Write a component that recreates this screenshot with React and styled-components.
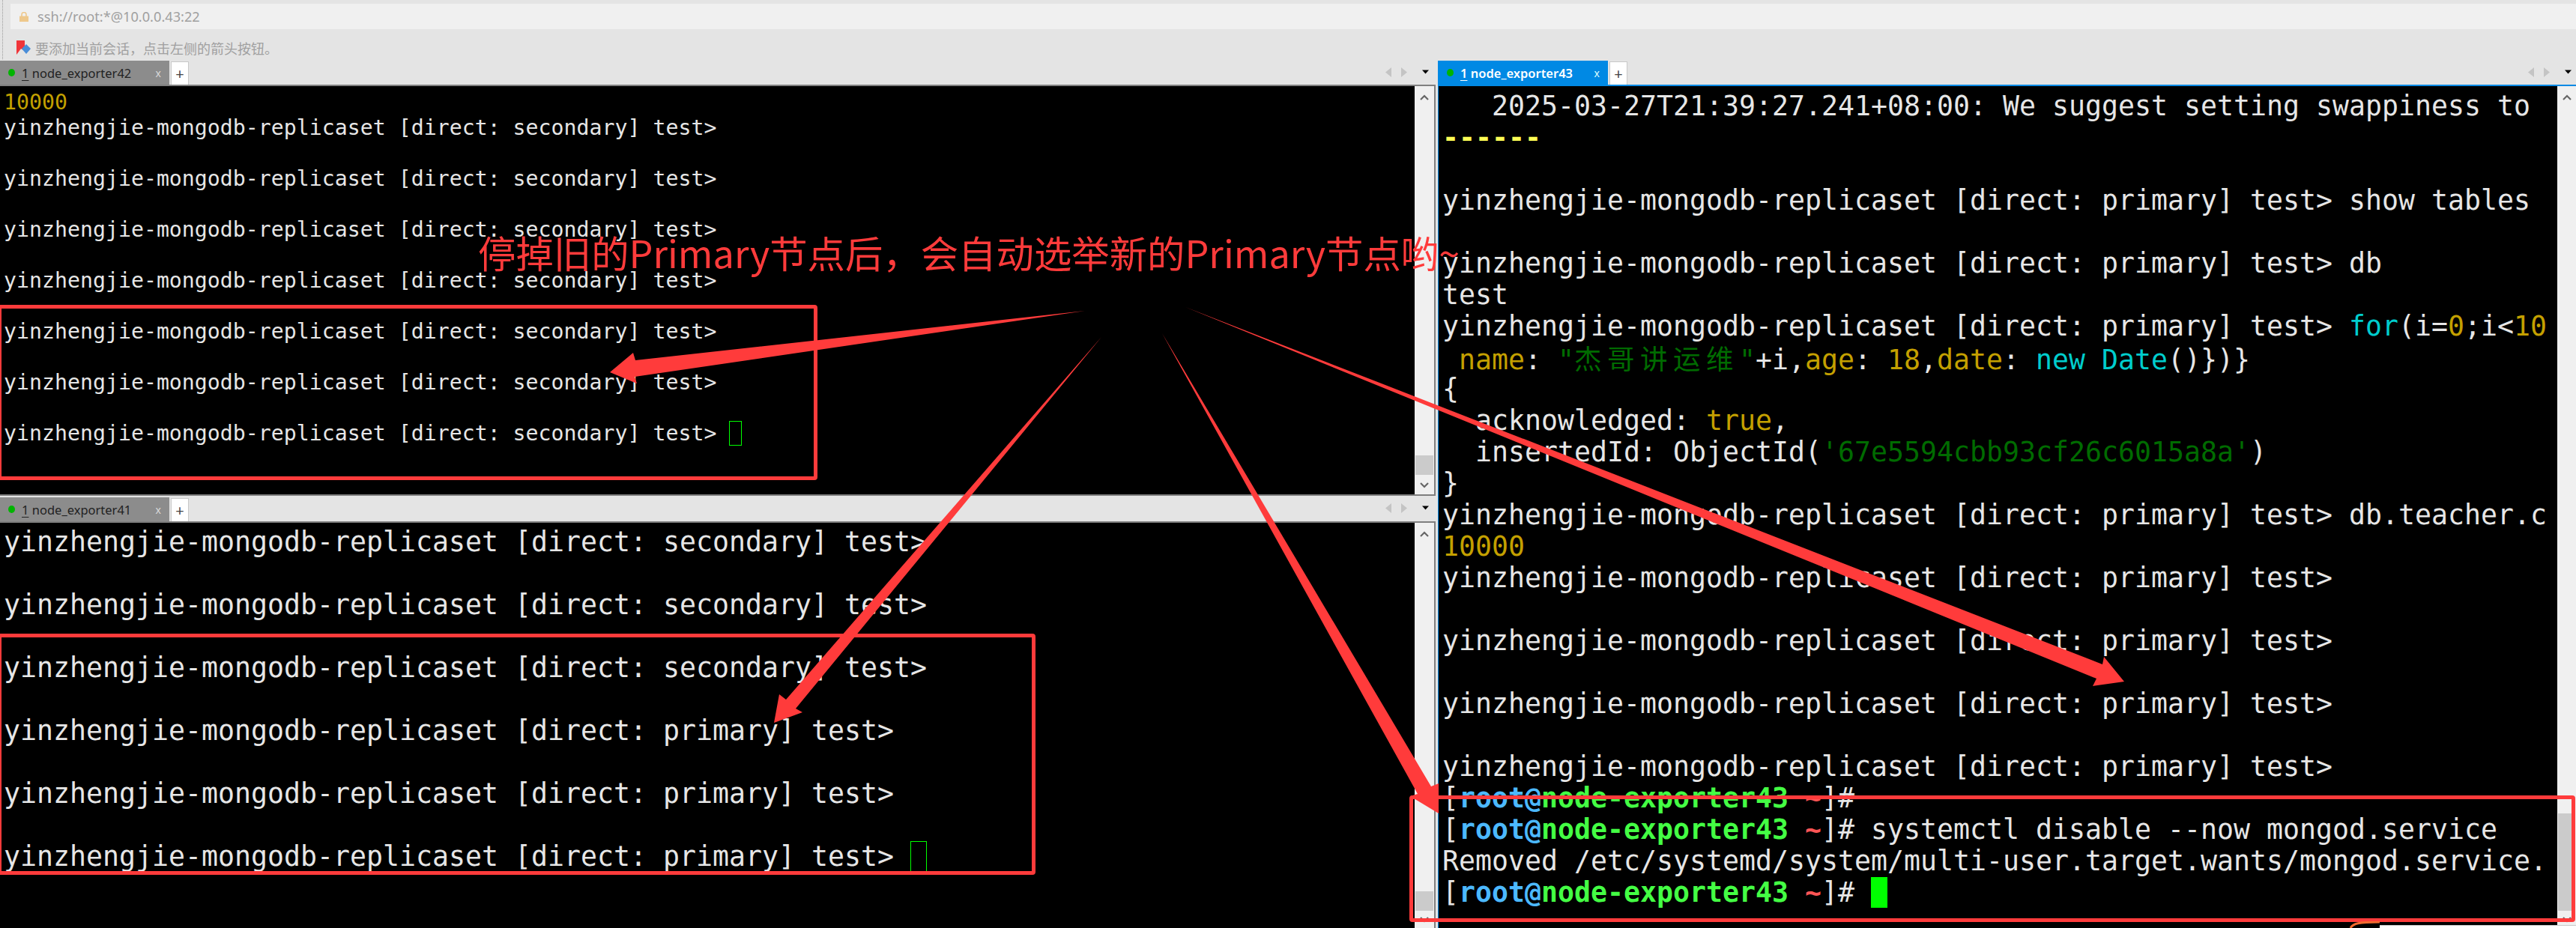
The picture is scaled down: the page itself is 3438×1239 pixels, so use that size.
import styled, { createGlobalStyle } from "styled-components";

const GlobalStyle = createGlobalStyle`
  html, body {
    margin: 0;
    padding: 0;
    background: #000;
  }
`;

const Page = styled.div`
  position: relative;
  width: 3438px;
  height: 1239px;
  overflow: hidden;
  display: flex;
  flex-direction: column;
  background: #e4e4e4;
  font-family: "Noto Sans", "Noto Sans CJK SC", sans-serif;
`;

const Toolbar = styled.div`
  height: 81px;
  flex: none;
  box-sizing: border-box;
  padding: 5px 0 0 14px;
  position: relative;
  background: #e4e4e4;

  &::before {
    content: "";
    position: absolute;
    left: 3px;
    top: 0;
    bottom: 2px;
    border-left: 1px dotted #9a9a9a;
  }
`;

const AddressBar = styled.div`
  height: 34px;
  display: flex;
  align-items: center;
  gap: 12px;
  padding-left: 12px;
  background: #f0f0f0;
  color: #a0a0a0;
  font-size: 18.2px;
`;

const HintRow = styled.div`
  height: 34px;
  margin-top: 8px;
  display: flex;
  align-items: center;
  gap: 5px;
  padding-left: 8px;
  color: #a0a0a0;
  font-size: 18px;
`;

const Workspace = styled.div`
  flex: 1;
  display: flex;
  min-height: 0;
`;

const LeftColumn = styled.div`
  width: 1916px;
  flex: none;
  display: flex;
  flex-direction: column;
`;

const Pane = styled.div`
  display: flex;
  flex-direction: column;
  height: ${(p) => p.$height}px;
  flex: ${(p) => (p.$height ? "none" : 1)};
  min-width: 0;
`;

const RightColumn = styled(Pane)`
  margin-left: 3px;
  border-left: 1px solid #0089e4;
`;

const TabBar = styled.div`
  box-sizing: border-box;
  height: ${(p) => (p.$lower ? 38 : 34)}px;
  flex: none;
  display: flex;
  align-items: flex-end;
  gap: 2px;
  padding-bottom: 2px;
  background: #e4e4e4;
  border-top: ${(p) => (p.$lower ? "2px solid #7f7f7f" : "0")};
  position: relative;

  &::after {
    content: "";
    position: absolute;
    left: 0;
    right: 0;
    bottom: 0;
    height: 2px;
    background: ${(p) => (p.$active ? "#0089e4" : "#7f7f7f")};
  }
`;

const Tab = styled.div`
  box-sizing: border-box;
  width: 226px;
  height: 32px;
  display: flex;
  align-items: center;
  padding-left: 11px;
  background: ${(p) => (p.$active ? "#0089e4" : "#8c8c8c")};
  color: ${(p) => (p.$active ? "#fff" : "#222")};
  font-size: 16.5px;
  font-weight: ${(p) => (p.$active ? 600 : 400)};
`;

const TabLabel = styled.span`
  white-space: pre;

  u {
    text-underline-offset: 3px;
  }
`;

const Dot = styled.span`
  width: 9px;
  height: 10px;
  border-radius: 50%;
  background: #00b400;
  margin-right: 9px;
  flex: none;
`;

const TabClose = styled.span`
  margin-left: auto;
  margin-right: 11px;
  color: ${(p) => (p.$active ? "#dff" : "#d8d8d8")};
  font-size: 14px;
  font-weight: 400;
`;

const PlusButton = styled.div`
  width: 24px;
  height: 31px;
  display: flex;
  align-items: center;
  justify-content: center;
  background: #fff;
  border: 1px solid #c8c8c8;
  border-bottom: 0;
  box-sizing: border-box;
  color: #444;
  font-size: 20px;
`;

const TabNav = styled.div`
  margin-left: auto;
  align-self: center;
  display: flex;
  align-items: center;
  margin-right: ${(p) => p.$right}px;
`;

const Body = styled.div`
  flex: 1;
  display: flex;
  min-height: 0;
`;

const Terminal = styled.div`
  flex: 1;
  min-width: 0;
  overflow: hidden;
  box-sizing: border-box;
  padding: ${(p) => p.$top}px 0 0 5px;
  background: #000;
  color: #e6e6e6;
  font-family: "DejaVu Sans Mono", "Noto Sans CJK SC", monospace;
  font-size: ${(p) => (p.$small ? "28.2px" : "36.5px")};
  letter-spacing: ${(p) => (p.$small ? "0.02px" : "0.025px")};
  line-height: ${(p) => (p.$small ? 34 : 42)}px;
`;

const Row = styled.div`
  height: ${(p) => (p.$small ? 34 : 42)}px;
  white-space: pre;
`;

const Yellow = styled.span`
  color: #c4a000;
`;

const BrightYellow = styled.span`
  color: #ffff55;
  font-weight: 700;
`;

const Cyan = styled.span`
  color: #00cdcd;
`;

const DarkGreen = styled.span`
  color: #006b00;
`;

const Wide = styled(DarkGreen)`
  font-family: "Noto Sans CJK SC", sans-serif;
  letter-spacing: 7.5px;
`;

const PromptUser = styled.span`
  color: #4cb9ff;
  font-weight: 700;
`;

const PromptHost = styled.span`
  color: #44ff44;
  font-weight: 700;
`;

const PromptTilde = styled.span`
  color: #ff5555;
  font-weight: 700;
`;

const Cursor = styled.span`
  display: inline-block;
  box-sizing: border-box;
  vertical-align: middle;
  width: ${(p) => p.$width}px;
  height: ${(p) => p.$size}px;
  margin-top: -4px;
  border: 1px solid #00ff00;
  background: ${(p) => (p.$solid ? "#00ff00" : "transparent")};
`;

const Scrollbar = styled.div`
  width: ${(p) => p.$width}px;
  flex: none;
  box-sizing: border-box;
  display: flex;
  flex-direction: column;
  align-items: center;
  background: #f0f0f0;
  border-right: ${(p) => (p.$edge ? "2px solid #7f7f7f" : "0")};
`;

const ScrollCap = styled.div`
  height: ${(p) => p.$height}px;
  flex: none;
  display: flex;
  align-items: center;
  justify-content: center;
`;

const ScrollGap = styled.div`
  flex: 1;
`;

const Thumb = styled.div`
  width: calc(100% - 2px);
  height: ${(p) => p.$height}px;
  flex: none;
  background: #cbcbcb;
`;

const Mark = styled.div`
  position: absolute;
  box-sizing: border-box;
  left: ${(p) => p.$x}px;
  top: ${(p) => p.$y}px;
  width: ${(p) => p.$w}px;
  height: ${(p) => p.$h}px;
  border: 5.5px solid #ff3b3b;
  border-radius: 4px;
`;

const Caption = styled.div`
  position: absolute;
  left: 638px;
  top: 301px;
  color: #ff3b3b;
  font-family: "Noto Sans CJK SC", sans-serif;
  font-weight: 400;
  font-size: 50.4px;
  line-height: 72px;
  white-space: pre;
`;

const ArrowLayer = styled.svg`
  position: absolute;
  left: 0;
  top: 0;
`;

const BottomStrip = styled.div`
  position: absolute;
  left: 3176px;
  right: 0;
  top: 1235px;
  height: 4px;
  background: #fff;
  border-top: 1px solid #c8c8c8;
`;

const OrangeArc = styled.svg`
  position: absolute;
  left: 3136px;
  top: 1230px;
`;

const LockIcon = () => (
  <svg width="12" height="13" viewBox="0 0 12 13">
    <path d="M3 6V3.5a3 3 0 0 1 6 0V6" fill="none" stroke="#eec88c" strokeWidth="1.6" />
    <rect x="0" y="5.5" width="12" height="7.5" fill="#eec88c" />
  </svg>
);

const BookmarkIcon = () => (
  <svg width="20" height="20" viewBox="0 0 20 20">
    <path d="M0 0h11v14l-5 -3l-6 8z" fill="#f0353a" />
    <path d="M13 5l6 6l-6 7l-6 -7z" fill="#4a8ed8" />
  </svg>
);

const Chevron = ({ down }) => (
  <svg width="12" height="9" viewBox="0 0 12 9">
    <path
      d={down ? "M1 2l5 5l5 -5" : "M1 7l5 -5l5 5"}
      fill="none"
      stroke="#666"
      strokeWidth="2.2"
    />
  </svg>
);

const NavArrows = () => (
  <svg width="58" height="14" viewBox="0 0 58 14">
    <path d="M8 0v13L0 6.5z" fill="#c4c4c4" />
    <path d="M21 0v13l8 -6.5z" fill="#c4c4c4" />
    <path d="M49 3.5h9l-4.5 5z" fill="#000" />
  </svg>
);

const Prompt = ({ mongo, role = "primary", children }) =>
  mongo ? (
    <>
      {`yinzhengjie-mongodb-replicaset [direct: ${role}] test>`}
      {children}
    </>
  ) : (
    <>
      [<PromptUser>root@</PromptUser>
      <PromptHost>node-exporter43</PromptHost> <PromptTilde>~</PromptTilde>]#
      {children}
    </>
  );

const PaneScroll = ({ thumb, tail, width = 28, edge }) => (
  <Scrollbar $width={width} $edge={edge}>
    <ScrollCap $height={30}>
      <Chevron />
    </ScrollCap>
    <ScrollGap />
    <Thumb $height={thumb} />
    <ScrollCap $height={tail}>
      <Chevron down />
    </ScrollCap>
  </Scrollbar>
);

const TabStrip = ({ name, active, lower, navRight }) => (
  <TabBar $active={active} $lower={lower}>
    <Tab $active={active}>
      <Dot />
      <TabLabel>
        <u>1</u> {name}
      </TabLabel>
      <TabClose $active={active}>x</TabClose>
    </Tab>
    <PlusButton>+</PlusButton>
    <TabNav $right={navRight}>
      <NavArrows />
    </TabNav>
  </TabBar>
);

const App = () => {
  return (
    <>
      <GlobalStyle />
      <Page>
        <Toolbar>
          <AddressBar>
            <LockIcon />
            ssh://root:*@10.0.0.43:22
          </AddressBar>
          <HintRow>
            <BookmarkIcon />
            要添加当前会话，点击左侧的箭头按钮。
          </HintRow>
        </Toolbar>
        <Workspace>
          <LeftColumn>
            <Pane $height={579}>
              <TabStrip name="node_exporter42" navRight={9} />
              <Body>
                <Terminal $small $top={5}>
                  <Row $small>
                    <Yellow>10000</Yellow>
                  </Row>
                  {[0, 1, 2, 3, 4, 5, 6].map((i) => (
                    <div key={i}>
                      <Row $small>
                        <Prompt mongo role="secondary">
                          {i === 6 && (
                            <>
                              {" "}
                              <Cursor $width={17} $size={33} />
                            </>
                          )}
                        </Prompt>
                      </Row>
                      <Row $small> </Row>
                    </div>
                  ))}
                </Terminal>
                <PaneScroll thumb={26} tail={26} edge />
              </Body>
            </Pane>
            <Pane>
              <TabStrip name="node_exporter41" lower navRight={9} />
              <Body>
                <Terminal $top={5}>
                  {["secondary", "secondary", "secondary", "primary", "primary", "primary"].map((role, i) => (
                    <div key={i}>
                      <Row>
                        <Prompt mongo role={role}>
                          {i === 5 && (
                            <>
                              {" "}
                              <Cursor $width={22} $size={42} />
                            </>
                          )}
                        </Prompt>
                      </Row>
                      <Row> </Row>
                    </div>
                  ))}
                </Terminal>
                <PaneScroll thumb={26} tail={23} edge />
              </Body>
            </Pane>
          </LeftColumn>
          <RightColumn>
            <TabStrip name="node_exporter43" active navRight={6} />
            <Body>
              <Terminal $top={6}>
                <Row>{"   2025-03-27T21:39:27.241+08:00: We suggest setting swappiness to"}</Row>
                <Row>
                  <BrightYellow>------</BrightYellow>
                </Row>
                <Row> </Row>
                <Row>
                  <Prompt mongo> show tables</Prompt>
                </Row>
                <Row> </Row>
                <Row>
                  <Prompt mongo> db</Prompt>
                </Row>
                <Row>test</Row>
                <Row>
                  <Prompt mongo>
                    {" "}
                    <Cyan>for</Cyan>(i=<Yellow>0</Yellow>;i&lt;<Yellow>10</Yellow>
                  </Prompt>
                </Row>
                <Row>
                  {" "}
                  <Yellow>name</Yellow>: <DarkGreen>"</DarkGreen>
                  <Wide>杰哥讲运维</Wide>
                  <DarkGreen>"</DarkGreen>+i,<Yellow>age</Yellow>: <Yellow>18</Yellow>,<Yellow>date</Yellow>:{" "}
                  <Cyan>new</Cyan> <Cyan>Date</Cyan>()&#125;)&#125;
                </Row>
                <Row>&#123;</Row>
                <Row>
                  {"  acknowledged: "}
                  <Yellow>true</Yellow>,
                </Row>
                <Row>
                  {"  insertedId: ObjectId("}
                  <DarkGreen>'67e5594cbb93cf26c6015a8a'</DarkGreen>)
                </Row>
                <Row>&#125;</Row>
                <Row>
                  <Prompt mongo> db.teacher.c</Prompt>
                </Row>
                <Row>
                  <Yellow>10000</Yellow>
                </Row>
                <Row>
                  <Prompt mongo />
                </Row>
                <Row> </Row>
                <Row>
                  <Prompt mongo />
                </Row>
                <Row> </Row>
                <Row>
                  <Prompt mongo />
                </Row>
                <Row> </Row>
                <Row>
                  <Prompt mongo />
                </Row>
                <Row>
                  <Prompt />
                </Row>
                <Row>
                  <Prompt> systemctl disable --now mongod.service</Prompt>
                </Row>
                <Row>Removed /etc/systemd/system/multi-user.target.wants/mongod.service.</Row>
                <Row>
                  <Prompt>
                    {" "}
                    <Cursor $width={22} $size={41} $solid />
                  </Prompt>
                </Row>
              </Terminal>
              <PaneScroll thumb={130} tail={23} width={25} />
            </Body>
          </RightColumn>
        </Workspace>

        <Mark $x={-3} $y={407} $w={1094} $h={234} />
        <Mark $x={-3} $y={846} $w={1385} $h={322} />
        <Mark $x={1881} $y={1062} $w={1556} $h={169} />
        <Caption>停掉旧的Primary节点后，会自动选举新的Primary节点哟~</Caption>
        <ArrowLayer width="3438" height="1239" viewBox="0 0 3438 1239">
          <path d="M1448 415L848 481L845 471L814 497L850 512L847 503z" fill="#ff3b3b" />
          <path d="M1470 450L1049 934L1040 927L1033 965L1071 951L1062 946z" fill="#ff3b3b" />
          <path d="M1582 410L2806 887L2808 877L2835 910L2793 916L2798 906z" fill="#ff3b3b" />
          <path d="M1551 445L1910 1050L1920 1046L1920 1086L1882 1063L1892 1060z" fill="#ff3b3b" />
        </ArrowLayer>
        <OrangeArc width="42" height="9" viewBox="0 0 42 9">
          <path d="M1 9C4 3 12 1 40 1" fill="none" stroke="#f26a2e" strokeWidth="3" />
        </OrangeArc>
        <BottomStrip />
      </Page>
    </>
  );
};

export default App;
